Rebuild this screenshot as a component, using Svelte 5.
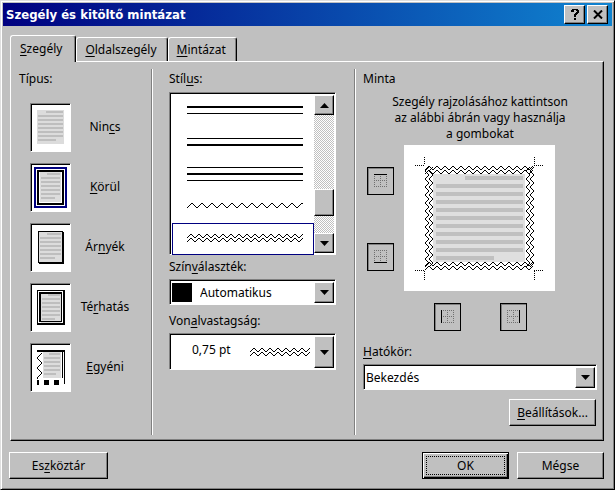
<script>
  const types = [
    { id: 'none', pre: 'Nin', key: 'c', post: 's' },
    { id: 'box', pre: '', key: 'K', post: 'örül' },
    { id: 'shadow', pre: 'Ár', key: 'n', post: 'yék' },
    { id: 'three', pre: 'Té', key: 'r', post: 'hatás' },
    { id: 'custom', pre: '', key: 'E', post: 'gyéni' }
  ];
  let type = $state('box');

  const styles = ['thick-thin', 'thin-thick', 'triple', 'wave', 'double-wave'];
  let style = $state('double-wave');

  // zigzag that runs along x (or along y when vertical), with short flat crests
  function wave(x, y, length, period, amp, vertical = false) {
    const half = period / 2;
    const pts = [];
    for (let p = 0, up = false; p <= length; p += half, up = !up) {
      const a = up ? -amp : amp;
      for (const d of [-0.5, 0.5]) {
        const q = Math.min(Math.max(p + d, 0), length);
        pts.push(vertical ? `${x + a},${y + q}` : `${x + q},${y + a}`);
      }
    }
    return pts.join(' ');
  }

  const lines = [0, 1, 2, 3, 4, 5, 6, 7, 8, 9, 10];
</script>

{#snippet arrow(up)}
  <svg width="9" height="5" viewBox="0 0 9 5" aria-hidden="true">
    <path d={up ? 'M0 5L4.5 0L9 5Z' : 'M0 0H9L4.5 5Z'} />
  </svg>
{/snippet}

{#snippet page(x, y, w, rows, pitch)}
  <rect {x} {y} width={w} height={rows * pitch + 2} fill="#dcdcdc" />
  {#each lines.slice(0, rows) as i}
    <rect
      x={i === 0 ? x + w * 0.35 : x + 1}
      y={y + 1 + i * pitch}
      width={i === 0 ? w * 0.65 - 1 : i === rows - 1 ? w * 0.65 : w - 2}
      height="2"
      fill="#bebebe"
    />
  {/each}
{/snippet}

{#snippet typeIcon(id)}
  <svg width="38" height="46" viewBox="0 0 38 46" shape-rendering="crispEdges" aria-hidden="true">
    {#if id === 'none'}
      {@render page(5, 5, 27, 8, 4)}
    {:else if id === 'box'}
      <rect x="3" y="3" width="31" height="39" fill="none" stroke="#000080" stroke-width="2" />
      {@render page(8, 7, 21, 7, 4)}
      <rect x="6" y="6" width="25" height="33" fill="none" stroke="#000" stroke-width="2" />
    {:else if id === 'shadow'}
      {@render page(7, 7, 23, 7, 4)}
      <path d="M6.5 38V6.5H31" fill="none" stroke="#000" />
      <path d="M7 38H31V7" fill="none" stroke="#000" stroke-width="2" />
    {:else if id === 'three'}
      <path d="M5.5 39V5.5H32" fill="none" stroke="#000" />
      <path d="M5 39H32V5" fill="none" stroke="#000" stroke-width="2" />
      {@render page(9, 8, 20, 7, 4)}
      <path d="M8 36.5H29.5V7" fill="none" stroke="#000" />
      <path d="M8 37V8H30" fill="none" stroke="#000" stroke-width="2" />
    {:else}
      {@render page(11, 7, 18, 6, 4)}
      <path d="M5 6H33" stroke="#000" stroke-width="2" />
      <path d="M30.5 7V33M32.5 7V39" stroke="#000" />
      <polyline points={wave(7.5, 8, 27, 10, 2, true)} fill="none" stroke="#000" />
      <path d="M5 35h2v5h-2zM12 35h5v5h-5zM22 35h5v5h-5z" />
    {/if}
  </svg>
{/snippet}

{#snippet edgeIcon(side)}
  <svg width="13" height="14" viewBox="0 0 13 14" aria-hidden="true">
    <path d="M0 .5H13M0 6.5H13M0 12.5H13M.5 0V13M6.5 0V13M12.5 0V13" stroke="#707070" stroke-dasharray="1 1" />
    {#if side === 'top'}<path d="M0 .5H13" stroke="#000" />{/if}
    {#if side === 'bottom'}<path d="M0 12.5H13" stroke="#000" />{/if}
    {#if side === 'left'}<path d="M.5 0V13" stroke="#000" />{/if}
    {#if side === 'right'}<path d="M12.5 0V13" stroke="#000" />{/if}
  </svg>
{/snippet}

<div class="dialog" role="dialog" aria-labelledby="title">
  <header>
    <h1 id="title">Szegély és kitöltő mintázat</h1>
    <button class="cap" aria-label="Súgó">
      <svg width="8" height="11" viewBox="0 0 8 11" shape-rendering="crispEdges"><path d="M1 0H7V1H8V4H7V5H6V6H5V8H3V5H4V4H5V3H6V2H5V1H3V3H0V1H1ZM3 9H5V11H3Z" /></svg>
    </button>
    <button class="cap" aria-label="Bezárás">
      <svg width="10" height="9" viewBox="0 0 10 9"><path d="M1 .5L9 8.5M9 .5L1 8.5" stroke="#000" stroke-width="2" /></svg>
    </button>
  </header>

  <div class="tabs" role="tablist">
    <button class="tab active" role="tab" aria-selected="true"><u>S</u>zegély</button>
    <button class="tab" role="tab" aria-selected="false"><u>O</u>ldalszegély</button>
    <button class="tab" role="tab" aria-selected="false"><u>M</u>intázat</button>
  </div>

  <main class="panel">
    <section class="types" role="radiogroup" aria-labelledby="types-label">
      <h2 id="types-label">Típus:</h2>
      {#each types as t}
        <label class="type">
          <input type="radio" name="type" value={t.id} bind:group={type} />
          <span class="frame">{@render typeIcon(t.id)}</span>
          <span class="name">{t.pre}<u>{t.key}</u>{t.post}</span>
        </label>
      {/each}
    </section>

    <section class="line">
      <h2 id="style-label">Stíl<u>u</u>s:</h2>
      <div class="list sunken">
        <div class="options" role="listbox" aria-labelledby="style-label">
          {#each styles as s}
            <button class="option" class:selected={s === style} role="option" aria-selected={s === style} aria-label={s} onclick={() => (style = s)}>
              <svg width="116" height="18" viewBox="0 0 116 18" shape-rendering="crispEdges">
                {#if s === 'thick-thin'}
                  <path d="M0 5h116v2H0zM0 12h116v1H0z" />
                {:else if s === 'thin-thick'}
                  <path d="M0 5h116v1H0zM0 11h116v2H0z" />
                {:else if s === 'triple'}
                  <path d="M0 2h116v1H0zM0 8h116v2H0zM0 15h116v1H0z" />
                {:else if s === 'wave'}
                  <polyline points={wave(0, 8.5, 116, 10, 2)} fill="none" stroke="#000" />
                {:else}
                  <polyline points={wave(0, 7, 116, 8, 1.5)} fill="none" stroke="#000" />
                  <polyline points={wave(0, 11, 116, 8, 1.5)} fill="none" stroke="#000" />
                {/if}
              </svg>
            </button>
          {/each}
        </div>
        <div class="scroll">
          <button class="raised" aria-label="Fel">{@render arrow(true)}</button>
          <span class="thumb raised"></span>
          <button class="raised" aria-label="Le">{@render arrow(false)}</button>
        </div>
      </div>

      <label for="color">Szín<u>v</u>álaszték:</label>
      <div class="combo sunken">
        <span class="swatch"></span>
        <select id="color"><option>Automatikus</option></select>
        <span class="drop raised">{@render arrow(false)}</span>
      </div>

      <label for="weight">Von<u>a</u>lvastagság:</label>
      <div class="combo sunken weight">
        <select id="weight"><option>0,75 pt</option></select>
        <svg class="sample" width="60" height="10" viewBox="0 0 60 10" shape-rendering="crispEdges" aria-hidden="true">
          <polyline points={wave(0, 3, 60, 8, 1.5)} fill="none" stroke="#000" />
          <polyline points={wave(0, 7, 60, 8, 1.5)} fill="none" stroke="#000" />
        </svg>
        <span class="drop raised">{@render arrow(false)}</span>
      </div>
    </section>

    <section class="preview">
      <h2>Minta</h2>
      <p>Szegély rajzolásához kattintson<br />az alábbi ábrán vagy használja<br />a gombokat</p>
      <div class="stage">
        <div class="side">
          <button class="edge" aria-label="Felső szegély">{@render edgeIcon('top')}</button>
          <button class="edge" aria-label="Alsó szegély">{@render edgeIcon('bottom')}</button>
        </div>
        <svg width="151" height="146" viewBox="0 0 151 146" shape-rendering="crispEdges" role="img" aria-label="Minta">
          <rect width="151" height="146" fill="#fff" />
          <rect x="29" y="29" width="92" height="88" fill="#dfdfdf" />
          {#each lines as i}
            <rect x={i === 0 ? 61 : 32} y={31 + i * 8} width={i === 0 || i === 10 ? 58 : 87} height="4" fill="#c0c0c0" />
          {/each}
          <path d="M11 20.5H21M20.5 12V20M130 20.5H140M130.5 12V20M11 125.5H21M20.5 126V135M130 125.5H140M130.5 126V135" stroke="#000" stroke-dasharray="1 1" />
          <g fill="none" stroke="#000">
            <polyline points={wave(21, 23, 108, 8, 1.5)} />
            <polyline points={wave(21, 27, 108, 8, 1.5)} />
            <polyline points={wave(21, 119, 108, 8, 1.5)} />
            <polyline points={wave(21, 123, 108, 8, 1.5)} />
            <polyline points={wave(23, 22, 100, 8, 1.5, true)} />
            <polyline points={wave(27, 22, 100, 8, 1.5, true)} />
            <polyline points={wave(124, 22, 100, 8, 1.5, true)} />
            <polyline points={wave(128, 22, 100, 8, 1.5, true)} />
          </g>
        </svg>
        <div class="under">
          <button class="edge" aria-label="Bal szegély">{@render edgeIcon('left')}</button>
          <button class="edge" aria-label="Jobb szegély">{@render edgeIcon('right')}</button>
        </div>
      </div>
      <label for="scope"><u>H</u>atókör:</label>
      <div class="combo sunken">
        <select id="scope"><option>Bekezdés</option></select>
        <span class="drop raised">{@render arrow(false)}</span>
      </div>
      <button class="btn raised settings"><u>B</u>eállítások...</button>
    </section>
  </main>

  <footer>
    <button class="btn raised toolbar">Es<u>z</u>köztár</button>
    <button class="btn raised ok"><span>OK</span></button>
    <button class="btn raised">Mégse</button>
  </footer>
</div>

<style>
  .dialog, .dialog * { box-sizing: border-box; }
  .dialog {
    font: 12px/16px 'Noto Sans', 'DejaVu Sans Condensed', sans-serif;
    color: #000;
    background: #c0c0c0;
    border: 1px solid;
    border-color: #dfdfdf #000 #000 #dfdfdf;
    box-shadow: inset 1px 1px #fff, inset -1px -1px #808080;
    padding: 2px 2px 10px;
  }
  button, select { font: inherit; color: inherit; margin: 0; padding: 0; border: 0; border-radius: 0; background: #c0c0c0; }
  h1, h2, p { margin: 0; font-size: inherit; font-weight: normal; }
  u { text-underline-offset: 2px; }
  svg { display: block; flex: none; }

  .raised {
    background: #c0c0c0;
    border: 1px solid;
    border-color: #fff #000 #000 #fff;
    box-shadow: inset -1px -1px #808080;
  }
  .sunken {
    background: #fff;
    border: 1px solid;
    border-color: #808080 #fff #fff #808080;
    box-shadow: inset 1px 1px #000;
    padding: 2px 1px 1px 2px;
  }

  header {
    display: flex;
    align-items: center;
    height: 23px;
    padding: 0 4px 0 3px;
    background: linear-gradient(90deg, #000080, #1084d0);
  }
  h1 { flex: 1; color: #fff; font: bold 13px/16px 'DejaVu Sans Condensed', 'DejaVu Sans', sans-serif; }
  .cap {
    display: grid;
    place-items: center;
    width: 21px;
    height: 19px;
    margin-left: 2px;
    border: 1px solid;
    border-color: #fff #000 #000 #fff;
    box-shadow: inset -1px -1px #808080;
  }

  .tabs { display: flex; align-items: flex-end; margin: 9px 7px 0; }
  .tab {
    height: 24px;
    padding: 0 10px 0 8px;
    border: 1px solid;
    border-color: #fff #000 transparent #fff;
    border-bottom: 0;
    border-radius: 3px 3px 0 0;
    box-shadow: inset -1px 0 #808080;
  }
  .tab.active { height: 27px; padding: 0 13px 0 9px; margin-bottom: -1px; position: relative; }

  .panel {
    display: flex;
    margin: 0 8px 0 7px;
    padding: 7px 6px 5px 8px;
    border: 1px solid;
    border-color: #fff #000 #000 #fff;
    box-shadow: inset -1px -1px #808080;
  }
  h2, label { display: block; }
  section { padding-top: 2px; }
  .types { width: 133px; border-right: 1px solid #808080; }
  .line { width: 203px; padding: 2px 18px 0 16px; border: 1px solid; border-color: transparent #808080 transparent #fff; border-width: 0 1px; }
  .preview { flex: 1; padding-left: 7px; border-left: 1px solid #fff; min-height: 366px; }

  .types h2 { margin-bottom: 16px; }
  .type { display: flex; align-items: center; height: 48px; margin: 0 0 12px 11px; }
  .type input { appearance: none; width: 0; height: 0; margin: 0; }
  .frame { background: #fff; border: 1px solid; border-color: #808080 #fff #fff #808080; box-shadow: inset 1px 1px #000; padding: 1px 0 0 1px; }
  .name { flex: 1; text-align: center; padding-right: 12px; }

  .list { display: flex; height: 163px; margin: 5px 0 4px; }
  .options { flex: 1; min-width: 0; }
  .option { display: grid; place-items: center; width: 100%; height: 32px; padding: 0 0 2px 4px; background: #fff; border: 1px solid #fff; }
  .option.selected { border-color: #000080; }
  .scroll { width: 20px; display: flex; flex-direction: column; background: repeating-conic-gradient(#c0c0c0 0 25%, #fff 0 50%) 0 0 / 2px 2px; }
  .scroll button { display: grid; place-items: center; height: 20px; }
  .thumb { height: 27px; margin: auto 0 17px; }

  .combo { display: flex; align-items: stretch; height: 26px; margin: 4px 0 8px; }
  .combo select { flex: 1; min-width: 0; appearance: none; background: #fff; padding: 0; outline: 0; }
  .drop { display: grid; place-items: center; width: 20px; pointer-events: none; }
  .swatch { width: 20px; margin: 1px 8px 1px 0; background: #000; }
  .weight { height: 37px; }
  .weight select { padding: 0 0 4px 20px; }
  .sample { align-self: center; margin-right: 4px; }

  .preview p { text-align: center; margin: 7px 0 3px; }
  .stage { display: grid; grid-template-columns: 27px auto; column-gap: 10px; justify-content: start; padding-left: 4px; }
  .side { display: flex; flex-direction: column; justify-content: space-between; padding: 22px 0 20px; }
  .under { grid-column: 2; display: flex; justify-content: space-between; padding: 12px 28px 13px 30px; }
  .edge { display: grid; place-items: center; width: 27px; height: 28px; border: 1px solid #000; box-shadow: inset 1px 1px #808080; }

  .btn { width: 87px; height: 27px; }
  .settings { display: block; margin: 9px 1px 0 auto; }
  footer { display: flex; gap: 8px; margin: 11px 8px 0 6px; }
  .toolbar { width: 99px; margin-right: auto; }
  .ok { border-color: #000; box-shadow: inset 1px 1px #fff, inset -1px -1px #000, inset -2px -2px #808080; padding: 3px; }
  .ok span { display: grid; place-items: center; height: 100%; border: 1px dotted #000; }
</style>
